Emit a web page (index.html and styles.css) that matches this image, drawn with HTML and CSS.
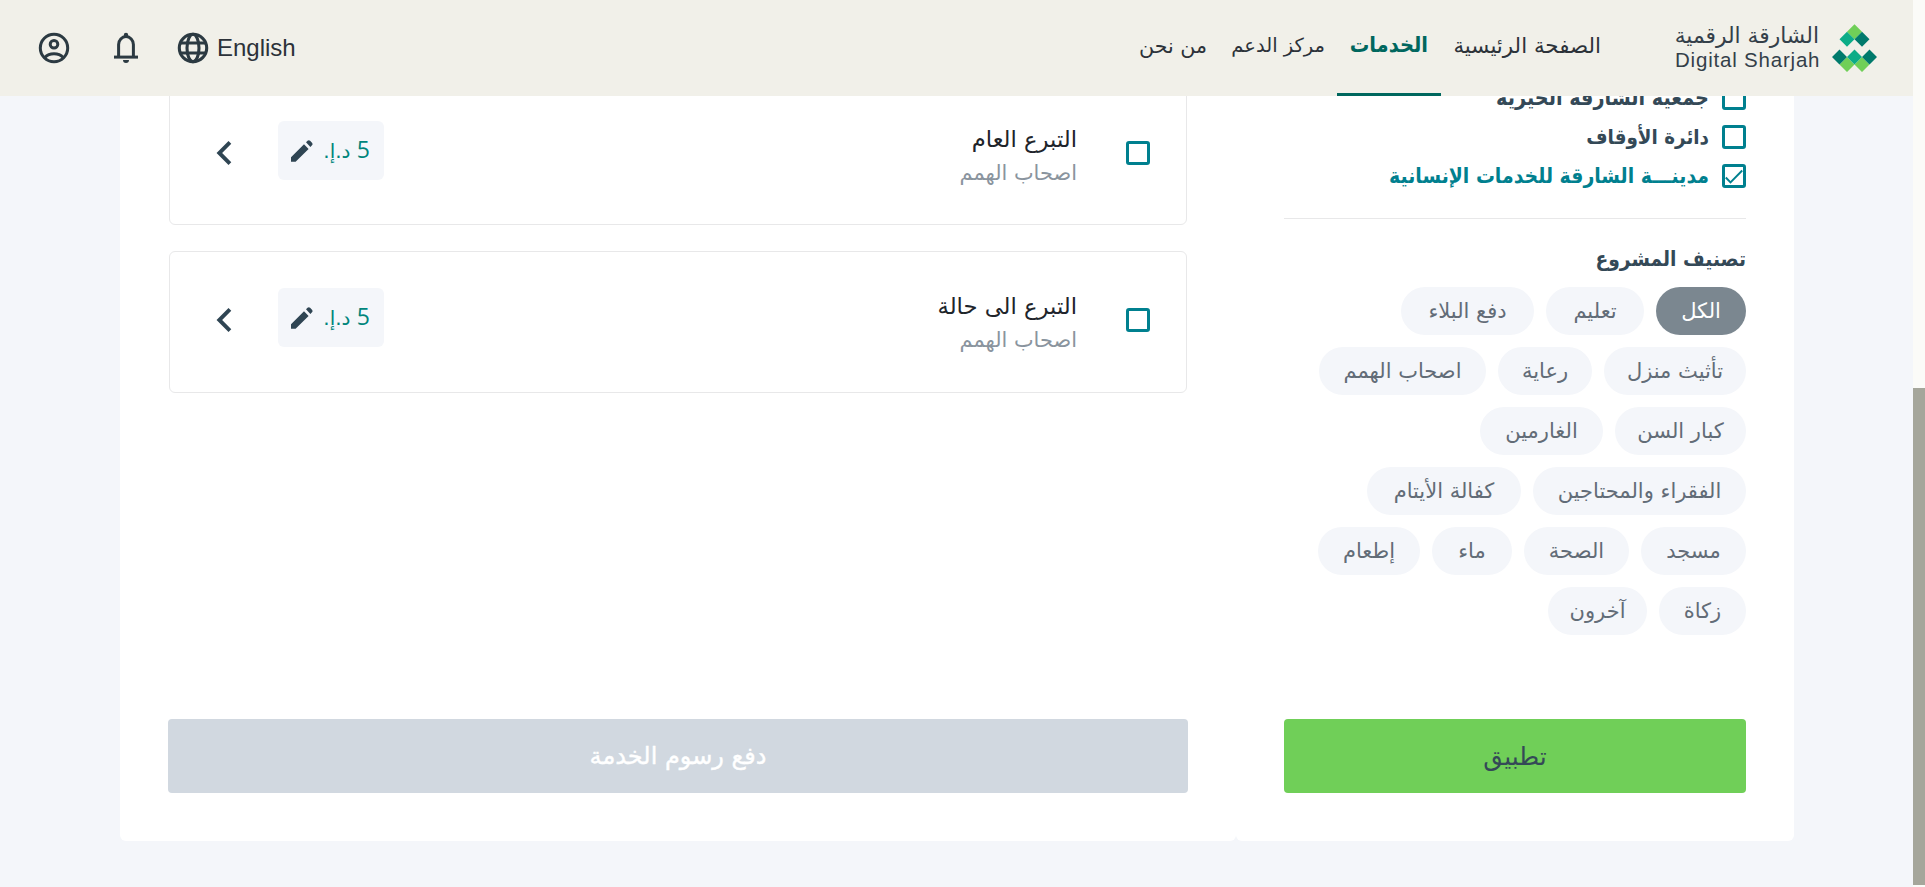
FILE: index.html
```
<!DOCTYPE html>
<html lang="ar" dir="rtl">
<head>
<meta charset="utf-8">
<title>الشارقة الرقمية</title>
<link rel="stylesheet" href="styles.css">
</head>
<body>
<div class="scrollbar"><div class="thumb"></div></div>
<div class="page">
  <header class="header">
    <a class="logo">
      <svg class="logo-mark" width="45" height="48" viewBox="576 71 135 144">
        <path fill="#70cf58" d="M643.500 71.500l22.500 22.500-22.500 22.500-22.500-22.500z"/>
        <path fill="#0cac87" d="M621 94l22.500 22.500-22.500 22.500-22.500-22.500z"/>
        <path fill="#007a6c" d="M666 94l22.500 22.500-22.500 22.500-22.500-22.500z"/>
        <path fill="#70cf58" d="M621 170l22.500 22.500-22.500 22.500-22.500-22.500zM666 170l22.500 22.500-22.500 22.500-22.500-22.500z"/>
        <path fill="#007a6c" d="M598.500 147.500l22.500 22.500-22.500 22.500-22.500-22.500zM688.500 147.500l22.500 22.500-22.500 22.500-22.500-22.500z"/>
        <path fill="#0cac87" d="M643.500 147.500l22.500 22.500-22.500 22.500-22.500-22.500z"/>
      </svg>
      <span class="logo-text"><span class="logo-ar">الشارقة الرقمية</span><span class="logo-en" dir="ltr">Digital Sharjah</span></span>
    </a>
    <nav class="nav">
      <a class="home">الصفحة الرئيسية</a>
      <a class="active">الخدمات</a>
      <a class="support">مركز الدعم</a>
      <a class="about">من نحن</a>
    </nav>
    <div class="tools">
      <a class="lang">
        <svg width="32" height="32" viewBox="0 0 32 32" fill="none" stroke="#2c3a42" stroke-width="3.100"><circle cx="16" cy="16" r="13.700"/><ellipse cx="16" cy="16" rx="6" ry="13.700"/><path d="M3.500 11h25M3.500 21h25"/></svg>
        <span dir="ltr">English</span>
      </a>
      <svg class="bell" width="26" height="32" viewBox="0 0 26 32" fill="none" stroke="#2c3a42" stroke-width="3"><path d="M5.600 24.500V12.500a7.400 7.900 0 0 1 14.800 0v12"/><path d="M1 25.100h24" stroke-width="3"/><path d="M10.800 5V3a2.200 2.200 0 0 1 4.400 0v2zM10 28h6a3 3 0 0 1-6 0z" fill="#2c3a42" stroke="none"/></svg>
      <svg class="account" width="32" height="32" viewBox="0 0 32 32" fill="none" stroke="#2c3a42" stroke-width="3"><circle cx="16" cy="16" r="13.700"/><circle cx="16" cy="12.200" r="3.800"/><path d="M7 25.200c2-2.200 5-3.500 9-3.500s7 1.300 9 3.500"/></svg>
    </div>
  </header>

  <main class="main">
    <aside class="panel sidebar">
      <ul class="charities">
        <li><i class="box"></i><span class="long">جمعية الشارقة الخيرية</span></li>
        <li><i class="box"></i><span class="short">دائرة الأوقاف</span></li>
        <li class="on"><i class="box"><svg width="18" height="18" viewBox="0 0 18 18"><path d="M.8 10.500l4.700 5L17.200 3.500" fill="none" stroke="#00808f" stroke-width="1.900"/></svg></i><span>مدينـــة الشارقة للخدمات الإنسانية</span></li>
      </ul>
      <h2 class="heading">تصنيف المشروع</h2>
      <div class="chips">
        <div class="chip-row"><span class="chip selected w90">الكل</span><span class="chip w98">تعليم</span><span class="chip w133">دفع البلاء</span></div>
        <div class="chip-row"><span class="chip w142">تأثيث منزل</span><span class="chip w94">رعاية</span><span class="chip w167">اصحاب الهمم</span></div>
        <div class="chip-row"><span class="chip w131">كبار السن</span><span class="chip w123">الغارمين</span></div>
        <div class="chip-row"><span class="chip w213">الفقراء والمحتاجين</span><span class="chip w154">كفالة الأيتام</span></div>
        <div class="chip-row"><span class="chip w105">مسجد</span><span class="chip w105">الصحة</span><span class="chip w80">ماء</span><span class="chip w102">إطعام</span></div>
        <div class="chip-row"><span class="chip w87">زكاة</span><span class="chip w99">آخرون</span></div>
      </div>
      <button class="button apply">تطبيق</button>
    </aside>

    <section class="panel projects">
      <article class="card first">
        <i class="box"></i>
        <div class="info"><h3>التبرع العام</h3><p>اصحاب الهمم</p></div>
        <div class="price"><span><b>5</b> د.إ.</span><svg width="22" height="22" viewBox="0 0 22 22" fill="#2f4553"><path d="M0 17.300L13 4.300l4.600 4.600L4.600 21.800H0zM15 2.300l1.500-1.500a2 2 0 0 1 2.600 0l1.900 1.900a2 2 0 0 1 0 2.600l-1.600 1.600z"/></svg></div>
        <svg class="chevron" width="16" height="24" viewBox="0 0 16 24"><path d="M13.900 1.400L3.300 12l10.600 10.600" fill="none" stroke="#2f4553" stroke-width="3.900"/></svg>
      </article>
      <article class="card">
        <i class="box"></i>
        <div class="info"><h3>التبرع الى حالة</h3><p>اصحاب الهمم</p></div>
        <div class="price"><span><b>5</b> د.إ.</span><svg width="22" height="22" viewBox="0 0 22 22" fill="#2f4553"><path d="M0 17.300L13 4.300l4.600 4.600L4.600 21.800H0zM15 2.300l1.500-1.500a2 2 0 0 1 2.600 0l1.900 1.900a2 2 0 0 1 0 2.600l-1.600 1.600z"/></svg></div>
        <svg class="chevron" width="16" height="24" viewBox="0 0 16 24"><path d="M13.900 1.400L3.300 12l10.600 10.600" fill="none" stroke="#2f4553" stroke-width="3.900"/></svg>
      </article>
      <button class="button pay">دفع رسوم الخدمة</button>
    </section>
  </main>
</div>
</body>
</html>
```
FILE: styles.css
```
* { box-sizing: border-box; }
body {
  margin: 0;
  height: 887px;
  display: flex;
  overflow: hidden;
  background: #f4f6fa;
  color: #2f3b45;
  font-family: "DejaVu Sans", sans-serif;
  font-size: 21px;
}
svg { display: block; flex: none; }
h2, h3, p, ul { margin: 0; padding: 0; list-style: none; }
.scrollbar { width: 12px; flex: none; padding-top: 388px; background: #fbfbf8; }
.thumb { height: 497px; background: #a5a69b; }
.page { flex: 1; }

.header {
  height: 96px;
  display: flex;
  background: #f1f0e9;
  color: #2c3239;
  padding: 0 36px 0 38px;
}
.logo { display: flex; gap: 13px; width: 202px; padding-top: 24px; }
.logo-text { display: flex; flex-direction: column; width: 144px; white-space: nowrap; color: #343f49; }
.logo-ar { font-size: 21.8px; line-height: 24px; }
.logo-en {
  font: 20.5px/24px "Liberation Sans", Arial, sans-serif;
  letter-spacing: .8px;
}
.nav { display: flex; margin-right: 62px; white-space: nowrap; }
.nav a { padding: 31px 12px 0; line-height: 30px; border-bottom: 3px solid transparent; }
.nav .home { width: 172px; font-size: 21.4px; }
.nav .active {
  width: 104px;
  padding: 30px 13px 0;
  font-family: "DejaVu Sans Condensed", "DejaVu Sans";
  font-stretch: condensed;
  font-weight: bold;
  font-size: 21.7px;
  color: #00675e;
  border-bottom-color: #00675e;
}
.nav .support { width: 118px; font-size: 19.5px; }
.nav .about { padding-right: 12px; font-size: 20.6px; }
.tools { display: flex; align-items: center; margin-right: auto; gap: 47px; }
.lang {
  display: flex;
  align-items: center;
  gap: 8px;
  flex-direction: row-reverse;
  margin-left: -9px;
  font: 24px "Liberation Sans", Arial, sans-serif;
}
.account { margin-right: -4px; }

.main { height: 745px; width: 1674px; margin-right: 119px; display: flex; overflow: hidden; }
.panel { background: #fff; padding: 0 48px 48px; display: flex; flex-direction: column; border-radius: 0 0 6px 6px; }
.sidebar { width: 558px; }
.projects { width: 1116px; }

.box { width: 24px; height: 24px; flex: none; border: 3px solid #00808f; border-radius: 3px; }
.charities {
  display: flex;
  flex-direction: column;
  gap: 15px;
  margin-top: -10px;
  padding-bottom: 30px;
  border-bottom: 1px solid #e8e8e9;
  color: #344957;
  font: bold 21px/24px "DejaVu Sans Condensed", "DejaVu Sans";
  font-stretch: condensed;
}
.charities li { display: flex; gap: 13px; height: 24px; white-space: nowrap; }
.charities .long { font-size: 21.400px; }
.charities .short { font-size: 20.400px; }
.charities .on { color: #00808f; }
.heading {
  margin-top: 23px;
  height: 45px;
  color: #344957;
  font: bold 20.800px/34px "DejaVu Sans Condensed", "DejaVu Sans";
  font-stretch: condensed;
}
.chips { display: flex; flex-direction: column; gap: 12px; }
.chip-row { display: flex; gap: 12px; }
.chip {
  height: 48px;
  border-radius: 24px;
  background: #f4f6fa;
  color: #626c77;
  line-height: 48px;
  text-align: center;
  white-space: nowrap;
}
.selected { background: #7b8790; color: #fff; }
.w80 { width: 80px; } .w87 { width: 87px; } .w90 { width: 90px; } .w94 { width: 94px; }
.w98 { width: 98px; } .w99 { width: 99px; } .w102 { width: 102px; } .w105 { width: 105px; }
.w123 { width: 123px; } .w131 { width: 131px; } .w133 { width: 133px; } .w142 { width: 142px; }
.w154 { width: 154px; } .w167 { width: 167px; } .w213 { width: 213px; }

.button {
  height: 74px;
  flex: none;
  margin-top: auto;
  padding: 0;
  border: 0;
  border-radius: 4px;
  font: 24px "DejaVu Sans", sans-serif;
}
.apply { background: #70cf58; color: #344957; font-size: 25px; }
.pay { background: #d1d8e0; color: #fff; -webkit-text-stroke: .4px #fff; }

.card {
  display: flex;
  align-items: flex-start;
  height: 142px;
  flex: none;
  margin: 26px 1px 0;
  padding: 0 36px 0 46px;
  border: 1px solid #e8e8e9;
  border-radius: 6px;
}
.card.first { height: 141px; margin-top: -12px; }
.card .box { margin-top: 56px; }
.info { margin: 37px 49px 0 auto; white-space: nowrap; }
.info h3 { font-size: 22.700px; line-height: 34px; font-weight: normal; color: #20242a; }
.info p { font-size: 20.900px; line-height: 34px; color: #8a949e; }
.price {
  display: flex;
  width: 106px;
  height: 59px;
  margin-top: 36px;
  padding: 0 14px 0 13px;
  justify-content: space-between;
  border-radius: 6px;
  background: #f4f6fa;
  color: #00857c;
}
.price span { font-size: 20px; line-height: 60px; white-space: nowrap; }
.price b { font: 23px/50px "Open Sans", sans-serif; }
.price svg { margin-top: 19px; }
.chevron { margin: 56px 46px 0 0; }
```
